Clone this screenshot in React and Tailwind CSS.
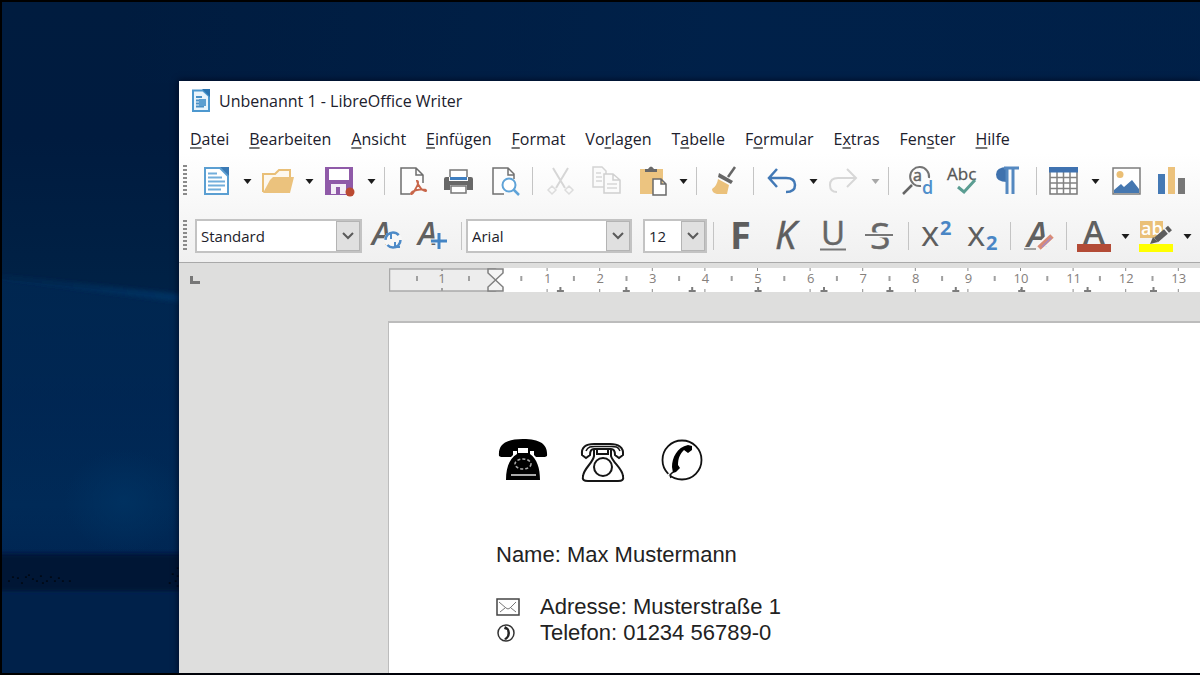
import { useState } from "react";

const MENU = [
  ["", "D", "atei"],
  ["", "B", "earbeiten"],
  ["", "A", "nsicht"],
  ["", "E", "infügen"],
  ["", "F", "ormat"],
  ["Vo", "r", "lagen"],
  ["T", "a", "belle"],
  ["F", "o", "rmular"],
  ["E", "x", "tras"],
  ["Fen", "s", "ter"],
  ["", "H", "ilfe"],
];

const CM = 52.6;
const TAB = 65.9;

function Wallpaper() {
  const dots = [
    [6, 582], [10, 578], [15, 579], [19, 584], [23, 578], [26, 576], [30, 580], [34, 582], [38, 577],
    [40, 584], [44, 582], [48, 578], [52, 582], [56, 579], [60, 582], [67, 582], [167, 584], [170, 575],
    [173, 582], [175, 569], [175, 577], [175, 587],
  ];
  return (
    <svg
      className="pointer-events-none absolute inset-0 h-full w-full"
      viewBox="0 0 1200 675"
      preserveAspectRatio="none"
      aria-hidden="true"
    >
      <defs>
        <linearGradient id="sky" x1="0" y1="0" x2="0" y2="1">
          <stop offset="0" stopColor="#001c3f" />
          <stop offset="0.2" stopColor="#001b3f" />
          <stop offset="0.41" stopColor="#002145" />
          <stop offset="0.6" stopColor="#00234f" />
          <stop offset="0.75" stopColor="#002a57" />
          <stop offset="0.82" stopColor="#002552" />
        </linearGradient>
        <linearGradient id="beam" x1="0" y1="0" x2="1" y2="0">
          <stop offset="0" stopColor="#00305f" stopOpacity="0.3" />
          <stop offset="1" stopColor="#003363" />
        </linearGradient>
        <linearGradient id="top" x1="0" y1="0" x2="1" y2="0">
          <stop offset="0.1" stopColor="#002a5c" stopOpacity="0" />
          <stop offset="0.6" stopColor="#002a5c" stopOpacity="0.35" />
          <stop offset="1" stopColor="#002a5c" stopOpacity="0.3" />
        </linearGradient>
        <linearGradient id="below" x1="0" y1="0" x2="0" y2="1">
          <stop offset="0" stopColor="#002a57" stopOpacity="0.6" />
          <stop offset="1" stopColor="#002a57" stopOpacity="0.3" />
        </linearGradient>
        <radialGradient id="glow">
          <stop offset="0" stopColor="#003464" />
          <stop offset="1" stopColor="#003464" stopOpacity="0" />
        </radialGradient>
        <filter id="soft">
          <feGaussianBlur stdDeviation="2" />
        </filter>
      </defs>
      <rect width="1200" height="675" fill="url(#sky)" />
      <rect width="1200" height="82" fill="url(#top)" />
      <path d="M0 279 L180 298 V560 H0 Z" fill="url(#below)" />
      <path d="M0 275 L180 294 V302 L0 279 Z" fill="url(#beam)" filter="url(#soft)" />
      <ellipse cx="122" cy="502" rx="60" ry="52" fill="url(#glow)" opacity="0.7" />
      <rect x="-10" y="555" width="300" height="38" fill="#001335" filter="url(#soft)" />
      <rect y="596" width="200" height="80" fill="#00214a" />
      {dots.map(([x, y]) => (
        <rect key={`${x}-${y}`} x={x} y={y} width="2" height="1" fill="#000" />
      ))}
    </svg>
  );
}

function Svg({ children }) {
  return (
    <svg className="h-8 w-8 overflow-visible" viewBox="0 0 32 32" fill="none" aria-hidden="true">
      {children}
    </svg>
  );
}

function Tool({ label, children }) {
  return (
    <button type="button" aria-label={label} className="flex h-8 w-[46px] shrink-0 items-center justify-center">
      {children}
    </button>
  );
}

function Drop({ label, faded }) {
  return (
    <button type="button" aria-label={label} className="flex h-8 w-4 shrink-0 items-center justify-center">
      <svg className="h-[5px] w-[9px]" viewBox="0 0 9 5" aria-hidden="true">
        <path d="M0.5 0 H8.5 L4.5 5 Z" fill={faded ? "#a8a8a8" : "#1c1c1c"} />
      </svg>
    </button>
  );
}

function Sep({ wide }) {
  return (
    <div className={`flex shrink-0 justify-center ${wide ? "w-3" : "w-[10px]"}`}>
      <div className="h-7 w-px bg-[#c4c4c4]" />
    </div>
  );
}

function Grip() {
  return (
    <div className="flex w-[14px] shrink-0 pl-1">
      <svg className="h-8 w-1" viewBox="0 0 4 32" aria-hidden="true">
        {[0, 4, 8, 12, 16, 20, 24, 28].map((y) => (
          <rect key={y} y={y} width="4" height="2" fill="#8a8a8a" />
        ))}
      </svg>
    </div>
  );
}

function Combo({ label, value, options, width, onChange }) {
  return (
    <div className={`relative h-[34px] shrink-0 border-2 border-[#c3c3c3] bg-white ${width}`}>
      <select
        aria-label={label}
        value={value}
        onChange={(e) => onChange(e.target.value)}
        className="h-full w-full appearance-none bg-transparent pl-1 text-[15px] text-[#1d1d2b] outline-none"
      >
        {options.map((o) => (
          <option key={o}>{o}</option>
        ))}
      </select>
      <span className="pointer-events-none absolute inset-y-0 right-0 flex w-6 items-center justify-center border border-[#b4b4b4] bg-[#e0e0e0]">
        <svg className="h-2 w-3" viewBox="0 0 12 8" fill="none" aria-hidden="true">
          <path d="M1 1 L6 6 L11 1" stroke="#5a5a5a" strokeWidth="2" />
        </svg>
      </span>
    </div>
  );
}

function StandardBar() {
  return (
    <div className="flex h-12 items-center overflow-hidden" role="toolbar" aria-label="Standard">
      <Grip />
      <Tool label="Neu">
        <Svg>
          <path d="M5 3 H20 L28 11 V29 H5 Z" fill="#fff" stroke="#5b9fd2" strokeWidth="2" />
          <path d="M20 2 H29 V11 Z" fill="#3a7ab5" />
          <path d="M8 8.500 H17 M8 12.500 H22 M8 16.500 H25 M8 20.500 H25 M8 24.500 H21" stroke="#72aedb" strokeWidth="2" />
        </Svg>
      </Tool>
      <Drop label="Neu Optionen" />
      <Tool label="Öffnen">
        <svg className="h-8 w-[34px]" viewBox="0 0 34 32" fill="none" aria-hidden="true">
          <path d="M2 27 V9 H14 L18 5 H29 V13" fill="#fdf8ef" stroke="#e9bf77" strokeWidth="2" />
          <path d="M2 28 L9 15 L12 12 H33 L29 28 Z" fill="#ebc27d" />
        </svg>
      </Tool>
      <Drop label="Öffnen Optionen" />
      <Tool label="Speichern">
        <Svg>
          <path d="M1 2 H29 V30 H1 Z" fill="#8f5aa8" />
          <path d="M5 4 H25 V15 H5 Z" fill="#fff" />
          <path d="M7 19 H22 V29 H7 Z" fill="#f4eef7" />
          <path d="M12 22 H16 V29 H12 Z" fill="#8f5aa8" />
          <circle cx="26" cy="27" r="4.500" fill="#bb4a32" />
        </Svg>
      </Tool>
      <Drop label="Speichern Optionen" />
      <Sep />
      <Tool label="Als PDF exportieren">
        <Svg>
          <path d="M14 29 H5 V3 H20 L27 10 V18 M20 3 V10 H27" fill="#fdfdfd" stroke="#6d6d6d" strokeWidth="1.500" />
          <path
            d="M21 16 C23 16 22 20 20 23 C18 27 16 30 15 29 C14 27 20 25 24 24.500 C28 24 31 25 30 26 C28 27 22 22 21 16 Z"
            fill="#fff"
            stroke="#c8664a"
            strokeWidth="1.800"
          />
        </Svg>
      </Tool>
      <Tool label="Drucken">
        <Svg>
          <path d="M8 12 V5 H25 V12" fill="#fff" stroke="#777" strokeWidth="1.500" />
          <path d="M4 12 H7 V16 H26 V12 H29 Q31 12 31 14 V25 H25 V20 H8 V25 H2 V14 Q2 12 4 12 Z" fill="#686868" />
          <path d="M8 12 H25 V15 H8 Z" fill="#3f7fc1" />
          <path d="M9 21 H24 V28 H9 Z" fill="#fff" stroke="#777" strokeWidth="1.500" />
        </Svg>
      </Tool>
      <Tool label="Druckvorschau">
        <Svg>
          <path d="M16 29 H5 V3 H20 L26 9 V14 M20 3 V10 H26" fill="#fdfdfd" stroke="#707070" strokeWidth="1.500" />
          <circle cx="21" cy="20" r="6.500" fill="#fff" stroke="#5fa3d8" strokeWidth="2" />
          <path d="M25.500 24.500 L31 30" stroke="#5fa3d8" strokeWidth="2.500" />
        </Svg>
      </Tool>
      <Sep />
      <Tool label="Ausschneiden">
        <Svg>
          <path d="M9 3 L21 23 M24 3 L12 23" stroke="#d6d6d6" strokeWidth="2" />
          <path d="M8 21 L12 25 L8 29 L4 25 Z M25 21 L29 25 L25 29 L21 25 Z" stroke="#dcdcdc" strokeWidth="1.500" />
        </Svg>
      </Tool>
      <Tool label="Kopieren">
        <Svg>
          <path d="M3 2 H12 L16 6 V22 H3 Z" stroke="#d4d4d4" strokeWidth="1.500" fill="#fbfbfb" />
          <path d="M14 9 H23 L30 15 V28 H14 Z M23 9 V15 H30" stroke="#d0d0d0" strokeWidth="1.500" fill="#fbfbfb" />
          <path d="M6 8 H11 M6 12 H12 M6 16 H12 M17 19 H27 M17 23 H27" stroke="#d8d8d8" strokeWidth="1.500" />
        </Svg>
      </Tool>
      <Tool label="Einfügen">
        <Svg>
          <path d="M4 4 H27 V29 H4 Z" fill="#ecc480" />
          <path d="M9 4 H12 Q15 -1 18 4 H21 V7 H9 Z" fill="#686868" />
          <path d="M17 14 H25 L30 19 V30 H17 Z M25 14 V19 H30" fill="#fff" stroke="#6a6a6a" strokeWidth="1.500" />
        </Svg>
      </Tool>
      <Drop label="Einfügen Optionen" />
      <Sep />
      <Tool label="Format übertragen">
        <Svg>
          <path d="M20 12 L27 2" stroke="#666" strokeWidth="2.500" />
          <path d="M11 8 L25 16 L23 19 L10 12 Z" fill="#666" />
          <path d="M10 14 L21 20 L19 29 H9 Q4 28 4 24 Q9 21 10 14 Z" fill="#ebc17b" />
        </Svg>
      </Tool>
      <Sep wide />
      <Tool label="Rückgängig">
        <Svg>
          <path d="M11 4 L3 13 L11 22 M3 13 H20 Q29 13 29 20 Q29 27 20 27" stroke="#4279b6" strokeWidth="2.500" />
        </Svg>
      </Tool>
      <Drop label="Rückgängig Optionen" />
      <Tool label="Wiederherstellen">
        <Svg>
          <path d="M19 4 L28 13 L19 22 M28 13 H10 Q2 13 2 20 Q2 27 9 27" stroke="#d7d7d7" strokeWidth="2" />
        </Svg>
      </Tool>
      <Drop label="Wiederherstellen Optionen" faded />
      <Sep />
      <Tool label="Suchen und Ersetzen">
        <Svg>
          <path d="M12 20 L3 29" stroke="#666" strokeWidth="2.500" />
          <path d="M21 21 A9.500 9.500 0 1 1 29 13" stroke="#747474" strokeWidth="2" />
          <text x="13" y="16" fontSize="16" fill="#666" stroke="#666" strokeWidth="0.500" fontFamily="Open Sans">a</text>
          <text x="22" y="29" fontSize="18" fontWeight="600" fill="#4f8fcb" fontFamily="Open Sans">d</text>
        </Svg>
      </Tool>
      <Tool label="Rechtschreibung">
        <Svg>
          <text x="1" y="15" fontSize="17" fill="#555" stroke="#555" strokeWidth="0.300" fontFamily="Open Sans">Abc</text>
          <path d="M12 22 L18 27 L29 15" stroke="#5b9d92" strokeWidth="3" />
        </Svg>
      </Tool>
      <Tool label="Formatierungszeichen">
        <Svg>
          <path d="M15 2 V17 Q4 17 4 9.500 Q4 2 15 2 Z" fill="#3f72ae" />
          <path d="M12 3 H27 M15 3 V29 M21 3 V29" stroke="#5488c0" strokeWidth="3" />
        </Svg>
      </Tool>
      <Sep />
      <Tool label="Tabelle einfügen">
        <Svg>
          <path d="M2 3 H29 V29 H2 Z" fill="#fff" stroke="#787878" strokeWidth="1.500" />
          <path d="M2 12.500 H29 M2 18 H29 M2 23.500 H29 M9 7 V29 M15.500 7 V29 M22 7 V29" stroke="#828282" strokeWidth="1.500" />
          <path d="M1 2 H30 V7.500 H1 Z" fill="#3f72b0" />
        </Svg>
      </Tool>
      <Drop label="Tabelle Optionen" />
      <Tool label="Bild einfügen">
        <Svg>
          <path d="M3 3 H30 V29 H3 Z" fill="#fff" stroke="#7c7c7c" strokeWidth="1.500" />
          <circle cx="10" cy="9.500" r="3.500" fill="#ebbf75" />
          <path d="M4 28 V25 L11 19 L14 22 L22 15 L29 24 V28 Z" fill="#4577b0" />
        </Svg>
      </Tool>
      <Tool label="Diagramm einfügen">
        <Svg>
          <rect x="2" y="9" width="7" height="20" fill="#4479b5" />
          <rect x="12" y="2" width="7" height="27" fill="#ecc27c" />
          <rect x="22" y="13" width="7" height="16" fill="#777" />
        </Svg>
      </Tool>
    </div>
  );
}

function FormatBar() {
  const [style, setStyle] = useState("Standard");
  const [font, setFont] = useState("Arial");
  const [size, setSize] = useState("12");

  return (
    <div className="flex items-center overflow-hidden pt-[14px] pb-[9px]" role="toolbar" aria-label="Formatierung">
      <Grip />
      <div className="w-[2px] shrink-0" />
      <Combo label="Absatzvorlage" value={style} onChange={setStyle} options={["Standard", "Überschrift 1"]} width="w-[167px]" />
      <div className="w-[2px] shrink-0" />
      <Tool label="Vorlage aktualisieren">
        <Svg>
          <text x="1" y="25" fontSize="32" fontStyle="italic" fontWeight="600" fill="#606060" fontFamily="Open Sans">A</text>
          <circle cx="22" cy="20" r="9" fill="#f7f7f7" />
          <circle cx="22" cy="20" r="7.500" stroke="#4d8ac7" strokeWidth="2.500" strokeDasharray="18 5.560" />
          <path d="M15 14 H20 V19 M29 27 H24 V22" stroke="#4d8ac7" strokeWidth="2" />
        </Svg>
      </Tool>
      <Tool label="Neue Vorlage">
        <Svg>
          <text x="1" y="25" fontSize="32" fontStyle="italic" fontWeight="600" fill="#606060" fontFamily="Open Sans">A</text>
          <path d="M14 21 H30 M22 13 V29" stroke="#f7f7f7" strokeWidth="5" />
          <path d="M14 21 H30 M22 13 V29" stroke="#4384c4" strokeWidth="3" />
        </Svg>
      </Tool>
      <Sep />
      <Combo label="Schriftart" value={font} onChange={setFont} options={["Arial", "Liberation Serif"]} width="w-[166px]" />
      <div className="w-[11px] shrink-0" />
      <Combo label="Schriftgröße" value={size} onChange={setSize} options={["10", "12", "14"]} width="w-[64px]" />
      <Sep wide />
      <Tool label="Fett">
        <Svg>
          <text x="4" y="29" fontSize="38" fontWeight="700" fill="#5e5e5e" fontFamily="Open Sans">F</text>
        </Svg>
      </Tool>
      <Tool label="Kursiv">
        <Svg>
          <text x="3" y="29" fontSize="38" fontStyle="italic" fill="#5e5e5e" stroke="#5e5e5e" strokeWidth="0.500" fontFamily="Open Sans">K</text>
        </Svg>
      </Tool>
      <Tool label="Unterstrichen">
        <Svg>
          <text x="3" y="25" fontSize="33" fill="#666" stroke="#666" strokeWidth="0.500" fontFamily="Open Sans">U</text>
          <path d="M2 29.500 H28" stroke="#777" strokeWidth="2" />
        </Svg>
      </Tool>
      <Tool label="Durchgestrichen">
        <Svg>
          <text x="6" y="29" fontSize="37" fill="#666" stroke="#666" strokeWidth="0.500" fontFamily="Open Sans">S</text>
          <path d="M1 15 H29" stroke="#f7f7f7" strokeWidth="5" />
          <path d="M1 15 H29" stroke="#777" strokeWidth="2" />
        </Svg>
      </Tool>
      <Sep />
      <Tool label="Hochgestellt">
        <Svg>
          <text x="1" y="26" fontSize="35" fontWeight="500" fill="#5e5e5e" fontFamily="Open Sans">x</text>
          <text x="20" y="15" fontSize="20" fontWeight="700" fill="#4a86c5" fontFamily="Open Sans">2</text>
        </Svg>
      </Tool>
      <Tool label="Tiefgestellt">
        <Svg>
          <text x="1" y="26" fontSize="35" fontWeight="500" fill="#5e5e5e" fontFamily="Open Sans">x</text>
          <text x="20" y="30" fontSize="20" fontWeight="700" fill="#4a86c5" fontFamily="Open Sans">2</text>
        </Svg>
      </Tool>
      <Sep />
      <Tool label="Direkte Formatierung löschen">
        <Svg>
          <text x="5" y="27" fontSize="35" fontStyle="italic" fontWeight="600" fill="#606060" fontFamily="Open Sans">A</text>
          <path d="M2 29 H14" stroke="#888" strokeWidth="1.500" />
          <path d="M17 28 L29 16" stroke="#f7f7f7" strokeWidth="8" />
          <path d="M17 28 L30 16" stroke="#d98b76" strokeWidth="5" />
          <path d="M20 27 L29 18" stroke="#a58bc6" strokeWidth="1.500" />
        </Svg>
      </Tool>
      <Sep />
      <Tool label="Schriftfarbe">
        <svg className="h-8 w-9 overflow-visible" viewBox="0 0 36 32" fill="none" aria-hidden="true">
          <text x="7" y="24" fontSize="33" fontWeight="600" fill="#606060" fontFamily="Open Sans">A</text>
          <rect x="1" y="24" width="34" height="8" fill="#b34b36" />
        </svg>
      </Tool>
      <Drop label="Schriftfarbe Optionen" />
      <Tool label="Zeichenhintergrund">
        <svg className="h-8 w-9 overflow-visible" viewBox="0 0 36 32" fill="none" aria-hidden="true">
          <rect x="2" y="1" width="23" height="17" fill="#eac078" />
          <text x="3" y="15" fontSize="18" fontWeight="600" fill="#fff" fontFamily="Open Sans">ab</text>
          <path d="M18 20 L32 8" stroke="#5d5d5d" strokeWidth="6" />
          <path d="M12 24 L15 17 L20 22 Z" fill="#5d5d5d" />
          <path d="M26 8 L31 14" stroke="#f3f3f3" strokeWidth="1.500" />
          <rect x="1" y="24" width="34" height="8" fill="#ffff00" />
        </svg>
      </Tool>
      <Drop label="Zeichenhintergrund Optionen" />
    </div>
  );
}

function Ruler() {
  const cms = Array.from({ length: 13 }, (_, i) => i + 1);
  return (
    <div className="flex pt-[5px] pl-[11px]">
      <button type="button" aria-label="Tabulator" className="mt-2 h-2 w-[10px] border-b-3 border-l-3 border-[#777]" />
      <svg className="ml-[189px] h-6 min-w-0 flex-1" aria-label="Lineal">
        <rect x="106" width="100%" height="24" fill="#fff" />
        <rect x="0.500" y="1" width="106" height="22" fill="#ededed" stroke="#a9a9a9" strokeWidth="1.500" />
        <g fill="#a0a0a0">
          <rect x="27" y="8" width="2" height="5" />
          <rect x="79" y="8" width="2" height="5" />
          <rect x="52" y="1" width="2" height="2" />
          <rect x="52" y="20" width="2" height="3" />
        </g>
        <text x="53" y="15" textAnchor="middle" fontSize="13" fill="#85807c" fontFamily="Open Sans">1</text>
        {cms.map((n) => {
          const x = 106 + n * CM;
          const tab = 105 + n * TAB;
          return (
            <g key={n}>
              <rect x={x - CM / 2 - 1} y="8" width="2" height="5" fill="#a0a0a0" />
              <rect x={x - 1} y="0" width="1" height="3" fill="#8b8b8b" />
              <rect x={x - 1} y="21" width="1" height="3" fill="#8b8b8b" />
              <text x={x} y="15" textAnchor="middle" fontSize="13" fill="#85807c" fontFamily="Open Sans">{n}</text>
              <path d={`M${tab - 3} 23 h7 M${tab + 0.5} 19 v4`} stroke="#7c7c7c" strokeWidth="2" />
            </g>
          );
        })}
        <path d="M99 1 H114 V5 L99 19 V23 H114 V19 L99 5 Z" fill="#f4f4f4" stroke="#808080" strokeWidth="1.500" />
      </svg>
    </div>
  );
}

function BlackPhone() {
  return (
    <svg className="h-11 w-[50px]" viewBox="0 0 50 44" aria-label="Telefon schwarz" role="img">
      <path
        d="M1 18 C0 7 7 1 25 1 C43 1 50 7 49 18 L47 19 H38 L36 17 V13 H32 V16 C39 21 42 30 42 42 H8 C8 30 11 21 19 16 V13 H15 V17 L13 19 H3 Z"
        fill="#000"
      />
      <path d="M20 10 H30 V15 H20 Z" fill="#fff" />
      <ellipse cx="25" cy="26" rx="8" ry="5" fill="none" stroke="#aaa" strokeWidth="1.500" strokeDasharray="3 2" />
      <path d="M13 37 H38" stroke="#aaa" strokeWidth="2" />
    </svg>
  );
}

function WhitePhone() {
  return (
    <svg className="h-11 w-[46px]" viewBox="0 0 46 44" fill="none" stroke="#161616" strokeWidth="2" aria-label="Telefon weiß" role="img">
      <path d="M2 17 C1 9 6 6 14 6 H30 C38 6 44 9 43 17 L39 20 L35 17 C35 13 34 11 31 11 H14 C11 11 10 13 10 17 L6 20 Z" />
      <path d="M6 13 C8 8 12 8.500 16 8.500 H30 C35 8.500 38 8 40 13" strokeWidth="1.500" />
      <path d="M14 12 V18 C13 25 4 30 3 38 C2 42 4 43 8 43 H38 C42 43 44 42 43 38 C42 30 33 25 31 18 V12 M17 12 V16 H28 V12" />
      <circle cx="23" cy="29" r="9" fill="#fff" />
    </svg>
  );
}

function RoundPhone() {
  return (
    <svg className="h-11 w-[42px]" viewBox="0 0 42 44" fill="none" aria-label="Telefon rund" role="img">
      <circle cx="21" cy="22" r="19.500" stroke="#111" strokeWidth="1.800" />
      <path d="M6 36 L9 39 L11 35 Z" fill="#fff" />
      <path
        d="M27 7 C16 9 11 20 11 29 L12 35 L15 34 L19 30 L17 27 C17 20 19 16 23 12 L27 15 L31 12 V8 Z"
        fill="#000"
      />
      <path d="M12 34 L9 37 L10 40" stroke="#111" strokeWidth="1.500" />
    </svg>
  );
}

export default function App() {
  return (
    <div className="relative flex min-h-screen border-y-2 border-l-2 border-black bg-[#001c3f] font-['Open_Sans',sans-serif]">
      <Wallpaper />
      <div className="relative mt-[79px] ml-[177px] flex min-w-0 flex-1 flex-col bg-[#dededd] shadow-[0_0_6px_1px_rgba(0,5,25,0.7)]">
        <header className="border-b border-[#a9a9a9] bg-linear-to-b from-white from-40% to-[#f0f0f0]">
          <div className="flex h-10 items-center gap-2 pl-3">
            <svg className="h-6 w-5" viewBox="0 0 20 24" fill="none" aria-hidden="true">
              <path d="M2 1.500 H12 L18 7 V22 H2 Z" fill="#eaf4fb" stroke="#4d98cf" strokeWidth="2" />
              <path d="M11 0 H19 V8 Z" fill="#2b74b0" />
              <path d="M5 8 H11 M5 11.500 H15 M5 14.500 H15 M5 17.500 H13" stroke="#4a90c6" strokeWidth="2" />
              <rect x="8" y="10" width="7" height="7" fill="#5d9fd0" />
            </svg>
            <h1 className="text-base whitespace-nowrap text-[#20202c]">Unbenannt 1 - LibreOffice Writer</h1>
          </div>
          <nav className="flex h-9 items-center gap-5 overflow-hidden pl-[11px] text-base text-[#20202c]">
            {MENU.map(([pre, key, post]) => (
              <button key={pre + key + post} type="button" className="shrink-0">
                {pre}
                <span className="underline decoration-[#777] decoration-2 underline-offset-2">{key}</span>
                {post}
              </button>
            ))}
          </nav>
          <StandardBar />
          <FormatBar />
        </header>
        <Ruler />
        <main className="mt-[29px] ml-[209px] flex-1 border-t-2 border-l border-[#bcbcbc] bg-white pt-[115px] pl-[107px] font-['Liberation_Sans',Arial,sans-serif] text-[22px] leading-[26px] text-[#222]">
          <div className="mb-[60px] flex gap-8 pl-[2px]">
            <BlackPhone />
            <WhitePhone />
            <div className="pl-[3px]">
              <RoundPhone />
            </div>
          </div>
          <p className="mb-[26px]">Name: Max Mustermann</p>
          <div className="flex items-center">
            <span className="w-11">
              <svg className="h-[18px] w-6" viewBox="0 0 24 18" fill="none" stroke="#444" aria-hidden="true">
                <path d="M1 1 H23 V17 H1 Z" strokeWidth="1.500" />
                <path d="M3 4 L10 10 Q12 12 14 10 L20 4 M4 14 L9 10 M20 14 L15 10" stroke="#777" />
              </svg>
            </span>
            <p>Adresse: Musterstraße 1</p>
          </div>
          <div className="flex items-center">
            <span className="w-11">
              <svg className="h-5 w-5" viewBox="0 0 20 20" fill="none" aria-hidden="true">
                <circle cx="10" cy="10" r="8" stroke="#333" strokeWidth="1.500" />
                <path d="M9 3 Q14 5 14 10 Q14 14 10 17 L8 16 L11 13 Q12 10 11 7 L8 6 Z" fill="#222" />
              </svg>
            </span>
            <p>Telefon: 01234 56789-0</p>
          </div>
        </main>
      </div>
    </div>
  );
}
